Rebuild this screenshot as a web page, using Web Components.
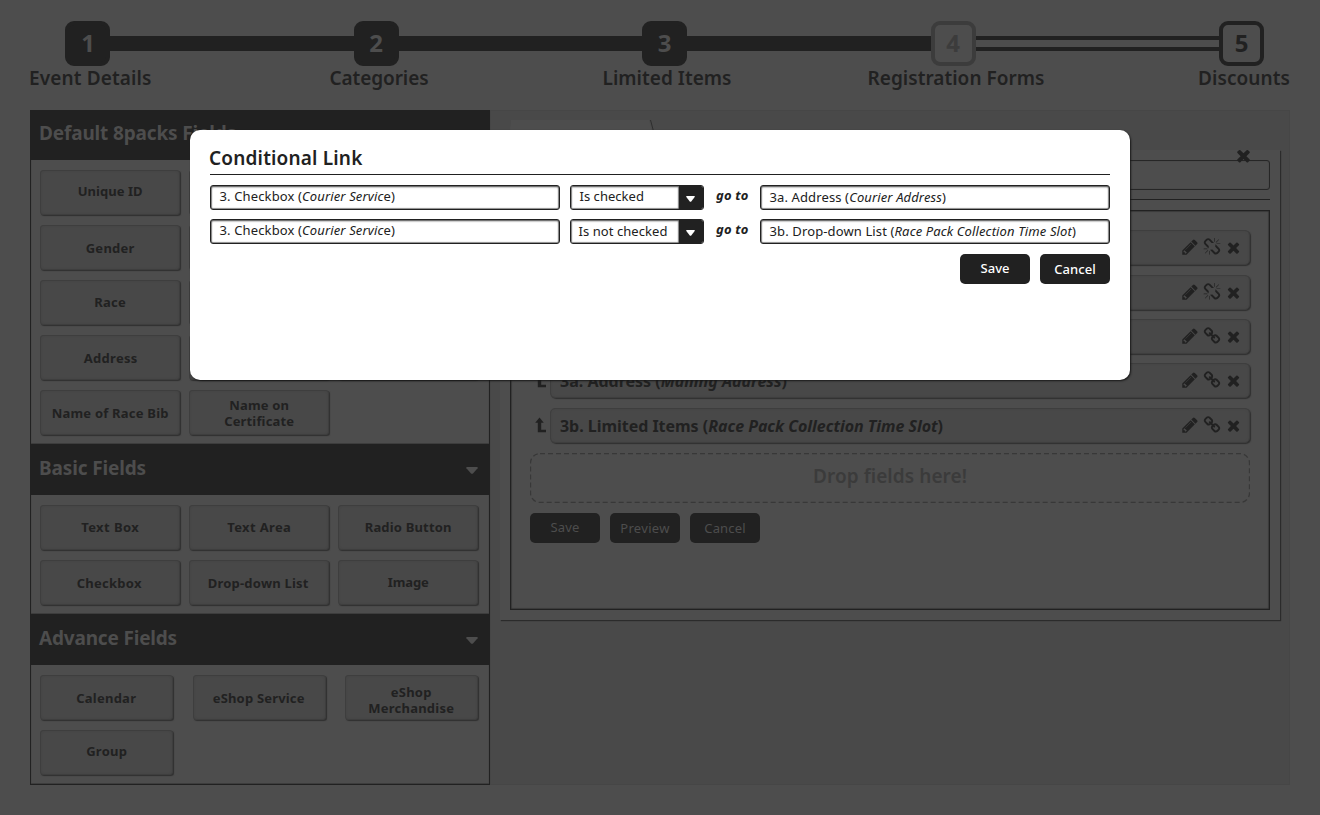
<!DOCTYPE html>
<html lang="en">
<head>
<meta charset="utf-8">
<title>Event setup</title>
<style>
html,body{margin:0;height:100%;background:#4d4d4d}
body{width:1320px;height:815px;overflow:hidden;font-family:"Noto Sans","Open Sans",sans-serif;color:#212121}
</style>
</head>
<body>
<app-page></app-page>
<script>
const define=(name,html,setup)=>customElements.define(name,class extends HTMLElement{
  connectedCallback(){
    if(this.shadowRoot)return;
    const t=document.createElement('template');
    t.innerHTML=typeof html==='function'?html(this):html;
    this.attachShadow({mode:'open'}).append(t.content.cloneNode(true));
    if(setup)setup(this,this.shadowRoot);
  }
});
const at=(el,n,d='')=>el.getAttribute(n)??d;

/* Text whose tracking is adjusted so that it takes the width w. */
define('fit-text',`<style>:host{display:inline-block;white-space:nowrap}</style><slot></slot>`,el=>{
  const w=+at(el,'w','0');
  if(w){
    const nat=el.getBoundingClientRect().width;
    const sp=(w-nat)/el.textContent.length;
    el.style.letterSpacing=sp.toFixed(3)+'px';
  }
});

const paths={
  times:'M1490 1322q0 40-28 68l-136 136q-28 28-68 28t-68-28l-294-294-294 294q-28 28-68 28t-68-28l-136-136q-28-28-28-68t28-68l294-294-294-294q-28-28-28-68t28-68l136-136q28-28 68-28t68 28l294 294 294-294q28-28 68-28t68 28l136 136q28 28 28 68t-28 68l-294 294 294 294q28 28 28 68z',
  pencil:'M491 1536l91-91-235-235-91 91v107h128v128h107zm523-928q0-22-22-22-10 0-17 7l-542 542q-7 7-7 17 0 22 22 22 10 0 17-7l542-542q7-7 7-17zm-54-192l416 416-832 832h-416v-416zm683 96q0 53-37 90l-166 166-416-416 166-165q36-38 90-38 53 0 91 38l235 234q37 39 37 91z',
  chain:'M1520 1216q0-40-28-68l-208-208q-28-28-68-28-42 0-72 32 3 3 19 18.500t21.500 21.500 15 19 13 25.500 3.500 27.500q0 40-28 68t-68 28q-15 0-27.500-3.500t-25.500-13-19-15-21.500-21.500-18.500-19q-33 31-33 73 0 40 28 68l206 207q27 27 68 27 40 0 68-26l147-146q28-28 28-67zm-703-705q0-40-28-68l-206-207q-28-28-68-28-39 0-68 27l-147 146q-28 28-28 67 0 40 28 68l208 208q27 27 68 27 42 0 72-31-3-3-19-18.500t-21.500-21.500-15-19-13-25.500-3.500-27.500q0-40 28-68t68-28q15 0 27.500 3.500t25.500 13 19 15 21.500 21.500 18.500 19q33-31 33-73zm895 705q0 120-85 203l-147 146q-83 83-203 83-121 0-204-85l-206-207q-83-83-83-203 0-123 88-209l-88-88q-86 88-208 88-120 0-204-84l-208-208q-84-84-84-204t85-203l147-146q83-83 203-83 121 0 204 85l206 207q83 83 83 203 0 123-88 209l88 88q86-88 208-88 120 0 204 84l208 208q84 84 84 204z',
  broken:'M503 1271l-256 256q-10 9-23 9-12 0-23-9-9-10-9-23t9-23l256-256q10-9 23-9t23 9q9 10 9 23t-9 23zm169 41v320q0 14-9 23t-23 9-23-9-9-23v-320q0-14 9-23t23-9 23 9 9 23zm-224-224q0 14-9 23t-23 9h-320q-14 0-23-9t-9-23 9-23 23-9h320q14 0 23 9t9 23zm1264 128q0 120-85 203l-147 146q-83 83-203 83-121 0-204-85l-334-335q-21-21-42-56l239-18 273 274q28 28 68 27.500t68-27.500l147-146q28-28 28-67 0-40-28-68l-274-275 18-239q35 21 56 42l336 336q84 86 84 204zm-617-724l-239 18-273-274q-28-28-68-28-39 0-68 27l-147 146q-28 28-28 67 0 40 28 68l274 274-18 240q-35-21-56-42l-336-336q-84-86-84-204 0-120 85-203l147-146q83-83 203-83 121 0 204 85l334 335q21 21 42 56zm633 84q0 14-9 23t-23 9h-320q-14 0-23-9t-9-23 9-23 23-9h320q14 0 23 9t9 23zm-544-544v320q0 14-9 23t-23 9-23-9-9-23v-320q0-14 9-23t23-9 23 9 9 23zm407 151l-256 256q-11 9-23 9t-23-9q-9-10-9-23t9-23l256-256q10-9 23-9t23 9q9 10 9 23t-9 23z'
};
define('ui-icon',el=>`<style>:host{display:block;flex:none}svg{display:block}</style>
<svg width="${at(el,'size','18')}" height="${at(el,'size','18')}" viewBox="0 0 1792 1792"><path fill="currentColor" d="${paths[at(el,'name')]}"/></svg>`);

define('up-arrow',`<style>:host{display:block;flex:none}svg{display:block}</style>
<svg width="12" height="16" viewBox="0 0 12 16"><path fill="currentColor" d="M4.500 0.500L8.800 5.800H6.200V12.700H11V15.200H2.800V5.800H0.200Z"/></svg>`);

define('caret-down',el=>`<style>:host{display:block;flex:none}svg{display:block}</style>
<svg width="${at(el,'w','12')}" height="${at(el,'h','7')}" viewBox="0 0 12 7" preserveAspectRatio="none"><path fill="currentColor" d="M.8 0H11.200Q12 .2 11.600 1.200L7 6.400Q6 7.300 5 6.400L.4 1.200Q0 .2 .8 0Z"/></svg>`);

define('step-node',el=>`<style>
:host{display:flex;flex:none;align-items:flex-start;justify-content:center;box-sizing:border-box;width:45px;height:45px;border-radius:9px;background:#212121;color:#4d4d4d;font:700 24px/35px "Noto Sans",sans-serif;border:4px solid #212121}
:host([first]){padding-left:1px}
:host([kind=off]){background:#4d4d4d;border-color:#3c3c3c;color:#3c3c3c}
:host([kind=next]){background:#4d4d4d;color:#212121}
</style><slot></slot>`);

define('step-bar',`<style>
:host{display:block;height:110px}
.track{display:flex;align-items:center;padding:21px 56px 0 65px;height:45px}
i{flex:1;height:15px;background:#212121}
i.open{box-sizing:border-box;background:#4d4d4d;border:solid #212121;border-width:4px 0}
.labels{display:flex;padding-left:29px;font-weight:600;font-size:19px;line-height:24px}
.labels fit-text{flex:none}
</style>
<div class="track"><step-node first>1</step-node><i></i><step-node>2</step-node><i></i><step-node>3</step-node><i></i><step-node kind="off">4</step-node><i class="open"></i><step-node kind="next">5</step-node></div>
<div class="labels"><fit-text w="122.500">Event Details</fit-text><fit-text w="99" style="margin-left:178px">Categories</fit-text><fit-text w="129" style="margin-left:174px">Limited Items</fit-text><fit-text w="177" style="margin-left:136px">Registration Forms</fit-text><fit-text w="92" style="margin-left:153.500px">Discounts</fit-text></div>`);

define('field-tile',el=>`<style>
:host{display:flex;box-sizing:border-box;height:45px;margin-right:1px;align-items:center;justify-content:center;text-align:center;background:#484848;border:1px solid #3e3e3e;border-radius:3px;box-shadow:1px 1px 1px #303030,inset 0 0 2px #424242;font-weight:700;font-size:13px;line-height:16px}
div{position:relative;top:${+at(el,'dy','0')-1}px;left:${+at(el,'dx','0')+.2}px}
</style><div><slot></slot></div>`);

define('field-group',el=>`<style>
:host{display:block}
header{display:flex;box-sizing:border-box;height:${at(el,'hh','51')}px;justify-content:space-between;background:#212121;color:#4d4d4d;padding:0 11px 0 8px;font-weight:700;font-size:19px;line-height:${at(el,'lh','48')}px}
caret-down{margin-top:23px}
.grid{display:grid;grid-template-columns:repeat(3,${at(el,'col','141px')});justify-content:space-between;row-gap:10px;padding:10px 10px 0 9px;box-sizing:border-box;height:${at(el,'bh')}px;align-content:start;box-shadow:inset 0 -1px 0 #3d3d3d}
</style><header><fit-text w="${at(el,'tw')}">${at(el,'title')}</fit-text>${el.hasAttribute('plain')?'':'<caret-down></caret-down>'}</header><div class="grid"><slot></slot></div>`);

define('field-palette',`<style>
:host{display:block;box-sizing:border-box;width:460px;height:675px;border:1px solid #212121;box-shadow:inset 0 0 1px #2e2e2e}
</style>
<field-group plain title="Default 8packs Fields" tw="197" hh="49" lh="45" bh="284">
<field-tile dy="-1"><fit-text w="65">Unique ID</fit-text></field-tile><field-tile></field-tile><field-tile></field-tile>
<field-tile dy="1"><fit-text w="49">Gender</fit-text></field-tile><field-tile></field-tile><field-tile></field-tile>
<field-tile><fit-text w="32">Race</fit-text></field-tile><field-tile></field-tile><field-tile></field-tile>
<field-tile dx=".5" dy="1"><fit-text w="54">Address</fit-text></field-tile><field-tile></field-tile><field-tile></field-tile>
<field-tile dy="1"><fit-text w="117">Name of Race Bib</fit-text></field-tile><field-tile dy="1"><fit-text w="60">Name on</fit-text><br><fit-text w="70">Certificate</fit-text></field-tile>
</field-group>
<field-group title="Basic Fields" tw="107" bh="119">
<field-tile><fit-text w="58">Text Box</fit-text></field-tile><field-tile><fit-text w="64">Text Area</fit-text></field-tile><field-tile><fit-text w="87">Radio Button</fit-text></field-tile>
<field-tile dy="1" dx="-1"><fit-text w="65">Checkbox</fit-text></field-tile><field-tile dy="1" dx="-1"><fit-text w="101">Drop-down List</fit-text></field-tile><field-tile><fit-text w="41">Image</fit-text></field-tile>
</field-group>
<field-group title="Advance Fields" tw="138" col="134px" bh="119">
<field-tile dy="1" dx="-.5"><fit-text w="60">Calendar</fit-text></field-tile><field-tile dy="1" dx="-.5"><fit-text w="92">eShop Service</fit-text></field-tile><field-tile dx="-.5" dy="3"><fit-text w="41">eShop</fit-text><br><fit-text w="86">Merchandise</fit-text></field-tile>
<field-tile dy="-1"><fit-text w="41">Group</fit-text></field-tile>
</field-group>`);

define('push-button',el=>`<style>
:host{display:flex;box-sizing:border-box;width:70px;height:30px;justify-content:center;background:#212121;border-radius:5px;font-size:13px;line-height:${at(el,'lh','28')}px}
</style><slot></slot>`);

define('form-row',el=>`<style>
:host{display:flex;height:35px;align-items:center}
up-arrow{margin:-1px 3px 0 5px}
.box{flex:1;display:flex;box-sizing:border-box;height:35px;align-items:center;padding:0 7px 0 9px;background:#484848;border:1px solid #3e3e3e;border-radius:5px;box-shadow:1px 1px 1px #303030,inset 0 0 2px #424242;font-weight:700;font-size:16px;line-height:33px}
.text{flex:1;height:33px}
ui-icon{margin-bottom:1px}
ui-icon+ui-icon{margin-left:4px}
ui-icon[name=times]{margin-left:4.500px;margin-bottom:0}
</style>${el.hasAttribute('child')?'<up-arrow></up-arrow>':''}
<div class="box"><div class="text"><slot></slot></div><ui-icon name="pencil"></ui-icon><ui-icon name="${at(el,'link','chain')}"></ui-icon><ui-icon name="times" size="17"></ui-icon></div>`);

define('form-editor',`<style>
:host{display:block;box-sizing:border-box;width:800px;height:675px;background:#494949;border:1px solid #464646;padding:9px 9px 0 9px}
.tab{height:30px;padding-left:8px}
.tab svg{display:block}
.card{box-sizing:border-box;height:470px;width:780px;background:#4d4d4d;box-shadow:1px 1px 1px #2b2b2b;padding:10px 11px 0 10px;position:relative}
.close{position:absolute;right:27px;top:-4px}
.name{box-sizing:border-box;width:760px;height:30px;border:1px solid #262626;border-radius:3px;box-shadow:inset 0 0 1px #333}
hr{border:0;height:1px;background:#212121;width:760px;margin:9px 0 10px}
.canvas{box-sizing:border-box;width:760px;height:400px;border:1px solid #212121;box-shadow:inset 0 0 1px 0.500px #2b2b2b;padding:19px 19px 0}
.rows{display:flex;flex-direction:column;width:720px;height:213px}
.rows form-row{margin-bottom:9px}
.rows .wide{margin-bottom:10px}
.drop{display:block;width:720px;height:50px}
.dropwrap{display:grid;margin-top:10px}
.dropwrap>*{grid-area:1/1}
.dropwrap fit-text{justify-self:center;color:#3b3b3b;font-weight:600;font-size:19px;line-height:46px}
.buttons{display:flex;gap:10px;margin-top:10px;color:#4d4d4d}
</style>
<div class="tab"><svg width="230" height="30"><path d="M3 0H141L149 30H0Z" fill="#4d4d4d"/><path d="M142.500 0L150.500 30" stroke="#2e2e2e" fill="none"/></svg></div>
<div class="card"><ui-icon class="close" name="times" size="19"></ui-icon>
<div class="name"></div><hr>
<div class="canvas"><div class="rows">
<form-row link="broken" class="wide"></form-row><form-row link="broken"></form-row><form-row></form-row>
<form-row child class="wide"><fit-text w="227" style="position:relative;top:1px">3a. Address (<em>Mailing Address</em>)</fit-text></form-row>
<form-row child><fit-text w="383" style="position:relative;top:1px">3b. Limited Items (<em>Race Pack Collection Time Slot</em>)</fit-text></form-row>
</div>
<div class="dropwrap"><svg class="drop"><rect x=".5" y=".5" width="719" height="49" rx="9.500" fill="none" stroke="#383838" stroke-width="1.300" stroke-dasharray="5 3"/></svg><fit-text w="154">Drop fields here!</fit-text></div>
<div class="buttons"><push-button><fit-text w="29">Save</fit-text></push-button><push-button lh="30"><fit-text w="49.500">Preview</fit-text></push-button><push-button lh="30"><fit-text w="41.500">Cancel</fit-text></push-button></div>
</div></div>`);

define('text-field',el=>`<style>
:host{display:block;box-sizing:border-box;width:350px;height:25px;border:1px solid #212121;border-radius:3px;background:#fff;box-shadow:inset 0 1px 2px #666,inset 0 0 1px .5px #333;padding-left:8.500px;font-size:13px;line-height:${at(el,'lh','21')}px}
</style><slot></slot>`);
define('select-field',el=>`<style>
:host{display:flex;box-sizing:border-box;width:134px;height:25px;border:1px solid #212121;border-radius:3px;background:#fff;font-size:13px;line-height:${at(el,'lh','21')}px;overflow:hidden}
.v{flex:1;padding-left:${at(el,'pl','8.5')}px;box-shadow:inset 0 1px 2px #666,inset 0 0 1px .5px #333}
.b{box-sizing:border-box;width:24px;background:#212121;color:#fff;padding:10px 0 0 7px}
</style><div class="v"><slot></slot></div><div class="b"><caret-down w="9" h="6"></caret-down></div>`);
define('link-rule',`<style>
:host{display:flex;height:25px}
.go{width:56px;padding-left:12px;box-sizing:border-box;font:italic 700 13px/21px "Noto Sans",sans-serif}
::slotted(select-field){margin-left:10px}
</style><slot name="from"></slot><slot name="cond"></slot><div class="go"><fit-text w="32.500">go to</fit-text></div><slot name="to"></slot>`);

define('link-dialog',`<style>
:host{display:block;box-sizing:border-box;width:940px;height:250px;background:#fff;border-radius:10px;box-shadow:1px 1px 2px #181818;padding:15px 20px 0}
h2{margin:0 0 0 -1px;font-weight:600;font-size:19px;line-height:26px}
hr{border:0;height:1px;background:#212121;margin:3px 0 10px}
link-rule+link-rule{margin-top:9px}
.actions{display:flex;justify-content:flex-end;gap:10px;margin-top:10px;color:#fff;font-weight:500}
</style>
<h2><fit-text w="153.500">Conditional Link</fit-text></h2><hr>
<link-rule><text-field slot="from"><fit-text w="175.500">3. Checkbox (<em>Courier Servic</em>e)</fit-text></text-field><select-field slot="cond"><fit-text w="64.500">Is checked</fit-text></select-field><text-field slot="to" lh="23"><fit-text w="176.500">3a. Address (<em>Courier Address</em>)</fit-text></text-field></link-rule>
<link-rule><text-field slot="from"><fit-text w="175.500">3. Checkbox (<em>Courier Servic</em>e)</fit-text></text-field><select-field slot="cond" lh="23" pl="7.5"><fit-text w="89">Is not checked</fit-text></select-field><text-field slot="to" lh="23"><fit-text w="306.500">3b. Drop-down List (<em>Race Pack Collection Time Slot</em>)</fit-text></text-field></link-rule>
<div class="actions"><push-button><fit-text w="29">Save</fit-text></push-button><push-button lh="30"><fit-text w="41.500">Cancel</fit-text></push-button></div>`);

define('app-page',`<style>
:host{display:block;width:1320px;height:815px;position:relative}
main{display:flex;padding:0 30px}
link-dialog{position:absolute;left:190px;top:130px}
</style><step-bar></step-bar><main><field-palette></field-palette><form-editor></form-editor></main><link-dialog></link-dialog>`);
</script>
</body>
</html>
